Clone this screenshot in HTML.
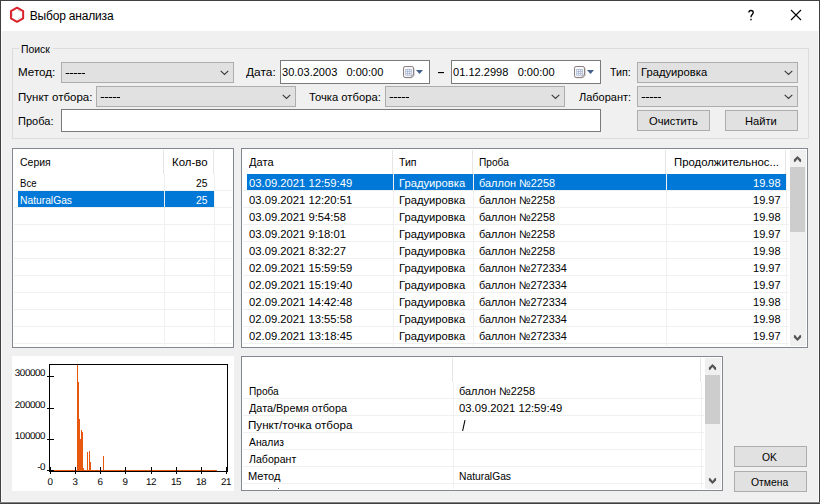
<!DOCTYPE html>
<html>
<head>
<meta charset="utf-8">
<title>Выбор анализа</title>
<style>
html,body{margin:0;padding:0;}
body{width:820px;height:504px;overflow:hidden;background:#f0f0f0;font-family:"Liberation Sans",sans-serif;font-size:11px;color:#000;position:relative;}
.a{position:absolute;white-space:nowrap;}
.t{position:absolute;white-space:nowrap;line-height:13px;height:13px;font-size:11px;transform-origin:0 0;}
#win{position:absolute;left:0;top:0;width:820px;height:504px;background:#f0f0f0;overflow:hidden;}
#titlebar{position:absolute;left:1px;top:1px;width:818px;height:30px;background:#fff;}
.bd{position:absolute;background:#404040;}
.combo{position:absolute;height:19px;border:1px solid #adadad;background:#e1e1e1;}
.combo svg{position:absolute;right:4px;top:6.7px;}
.edit{position:absolute;border:1px solid #7a7a7a;background:#fff;}
.btn{position:absolute;height:19px;border:1px solid #adadad;background:#e1e1e1;}
.list{position:absolute;border:1px solid #828790;background:#fff;}
.w{color:#fff;}
</style>
</head>
<body>
<div id="win">
  <div id="titlebar"></div>
  <div class="bd" style="left:0;top:0;width:820px;height:1px;"></div>
  <div class="bd" style="left:0;top:0;width:1px;height:504px;"></div>
  <div class="bd" style="left:1px;top:31px;width:1px;height:471px;background:#f9f9f9;"></div>
  <div class="bd" style="left:818px;top:31px;width:1px;height:471px;background:#f9f9f9;"></div>
  <div class="bd" style="left:1px;top:501px;width:818px;height:1px;background:#f9f9f9;"></div>
  <div class="bd" style="left:819px;top:0;width:1px;height:504px;"></div>
  <div class="bd" style="left:0;top:502px;width:820px;height:1px;background:#808080;"></div>
  <div class="bd" style="left:0;top:503px;width:820px;height:1px;"></div>

  <svg class="a" style="left:9px;top:6px;" width="17" height="18" viewBox="0 0 17 18">
    <polygon points="8.05,1.7 14.15,5.22 14.15,12.28 8.05,15.8 1.95,12.28 1.95,5.22" fill="#fff" stroke="#d9232a" stroke-width="2" stroke-linejoin="round"/>
    <path d="M3.4 6.6V10.6M8.6 3.9L11.4 5.6M8.6 13.2L11.7 11.3" stroke="#b4b4b4" stroke-width="0.6" fill="none"/>
  </svg>
  <div id="x_title" class="t" style="left:29.8px;top:8px;font-size:12px;line-height:16px;height:16px;letter-spacing:-0.19px;">Выбор анализа</div>
  <svg class="a" style="left:747px;top:9px;" width="9" height="13" viewBox="0 0 9 13"><path d="M1.9 3.5C1.9 2 2.9 1.5 4 1.5C5.3 1.5 6.2 2.2 6.2 3.5C6.2 4.7 5.5 5.2 4.8 5.9C4.2 6.5 4 7 4 8.3" stroke="#000" stroke-width="1.35" fill="none"/><rect x="3.3" y="9.8" width="1.4" height="1.5" fill="#000"/></svg>
  <svg class="a" style="left:790px;top:9px;" width="12" height="12" viewBox="0 0 12 12"><path d="M1 1 L11 11 M11 1 L1 11" stroke="#000" stroke-width="1.1" fill="none"/></svg>

<div class="a" style="left:12px;top:48px;width:795px;height:89px;border:1px solid #dcdcdc;"></div>
<div class="a" style="left:19px;top:44px;width:34px;height:9px;background:#f0f0f0;"></div>
<div id="x_poisk" class="t" style="left:21.20px;top:43px;transform:scaleX(0.9477);">Поиск</div>
<div id="x_metod" class="t" style="left:17.53px;top:65.6px;transform:scaleX(1.0557);">Метод:</div>
<div class="combo" style="left:61px;top:62px;width:171px;"><svg width="9" height="6" viewBox="0 0 9 6"><path d="M0.7 0.8 L4.5 4.5 L8.3 0.8" stroke="#3c3c3c" stroke-width="1.15" fill="none"/></svg></div>
<div class="a" style="left:65px;top:73px;width:20px;height:1px;background:rgba(0,0,0,0.33);"></div><div class="a" style="left:65.5px;top:73px;width:3px;height:1px;background:#000;"></div><div class="a" style="left:69.5px;top:73px;width:3px;height:1px;background:#000;"></div><div class="a" style="left:73.5px;top:73px;width:3px;height:1px;background:#000;"></div><div class="a" style="left:77.5px;top:73px;width:3px;height:1px;background:#000;"></div><div class="a" style="left:81.5px;top:73px;width:3px;height:1px;background:#000;"></div>
<div id="x_data" class="t" style="left:246.13px;top:65.6px;transform:scaleX(1.0871);">Дата:</div>
<div class="edit" style="left:280px;top:60px;width:148px;height:22px;"></div>
<div id="x_date1" class="t" style="left:281.90px;top:65.6px;transform:scaleX(1.0039);">30.03.2003&nbsp;&nbsp; 0:00:00</div>
<svg class="a" style="left:403px;top:66px;" width="21" height="13" viewBox="0 0 21 13">
<path d="M2 11.8H9.2L11.3 9.8V2.2" stroke="#cfcfcf" stroke-width="1" fill="none"/>
<path d="M2.1 0.5H8.9Q10.5 0.5 10.5 2.1V9L8.3 11.5H2.1Q0.5 11.5 0.5 9.9V2.1Q0.5 0.5 2.1 0.5Z" fill="#f7f7fb" stroke="#8d7f7e"/>
<path d="M10.5 9H8.3V11.5" fill="none" stroke="#a59a99" stroke-width="0.8"/>
<rect x="2.3" y="3" width="6.6" height="6.6" fill="#a9b6d0"/>
<path d="M3 3.7h1.3v1.3h-1.3zM5 3.7h1.3v1.3h-1.3zM7 3.7h1.3v1.3h-1.3zM3 5.7h1.3v1.3h-1.3zM5 5.7h1.3v1.3h-1.3zM7 5.7h1.3v1.3h-1.3zM3 7.7h1.3v1.3h-1.3zM5 7.7h1.3v1.3h-1.3zM7 7.7h1.3v1.3h-1.3z" fill="#eef1f8"/>
<polygon points="13,4 20,4 16.5,8" fill="#44618c"/>
</svg>
<div class="a" style="left:438px;top:72px;width:6px;height:1px;background:#000;"></div><div class="a" style="left:438px;top:73px;width:6px;height:1px;background:rgba(0,0,0,0.15);"></div>
<div class="edit" style="left:451px;top:60px;width:148px;height:22px;"></div>
<div id="x_date2" class="t" style="left:453.03px;top:65.6px;transform:scaleX(1.0064);">01.12.2998&nbsp;&nbsp; 0:00:00</div>
<svg class="a" style="left:574px;top:66px;" width="21" height="13" viewBox="0 0 21 13">
<path d="M2 11.8H9.2L11.3 9.8V2.2" stroke="#cfcfcf" stroke-width="1" fill="none"/>
<path d="M2.1 0.5H8.9Q10.5 0.5 10.5 2.1V9L8.3 11.5H2.1Q0.5 11.5 0.5 9.9V2.1Q0.5 0.5 2.1 0.5Z" fill="#f7f7fb" stroke="#8d7f7e"/>
<path d="M10.5 9H8.3V11.5" fill="none" stroke="#a59a99" stroke-width="0.8"/>
<rect x="2.3" y="3" width="6.6" height="6.6" fill="#a9b6d0"/>
<path d="M3 3.7h1.3v1.3h-1.3zM5 3.7h1.3v1.3h-1.3zM7 3.7h1.3v1.3h-1.3zM3 5.7h1.3v1.3h-1.3zM5 5.7h1.3v1.3h-1.3zM7 5.7h1.3v1.3h-1.3zM3 7.7h1.3v1.3h-1.3zM5 7.7h1.3v1.3h-1.3zM7 7.7h1.3v1.3h-1.3z" fill="#eef1f8"/>
<polygon points="13,4 20,4 16.5,8" fill="#44618c"/>
</svg>
<div id="x_tip" class="t" style="left:610.31px;top:65.6px;transform:scaleX(0.9732);">Тип:</div>
<div class="combo" style="left:637px;top:62px;width:159px;"><svg width="9" height="6" viewBox="0 0 9 6"><path d="M0.7 0.8 L4.5 4.5 L8.3 0.8" stroke="#3c3c3c" stroke-width="1.15" fill="none"/></svg></div>
<div id="x_grad_c" class="t" style="left:640.98px;top:65.6px;transform:scaleX(1.0192);">Градуировка</div>
<div id="x_punkt" class="t" style="left:17.62px;top:90.6px;transform:scaleX(1.0468);">Пункт отбора:</div>
<div class="combo" style="left:96px;top:86px;width:198px;"><svg width="9" height="6" viewBox="0 0 9 6"><path d="M0.7 0.8 L4.5 4.5 L8.3 0.8" stroke="#3c3c3c" stroke-width="1.15" fill="none"/></svg></div>
<div class="a" style="left:100px;top:97px;width:20px;height:1px;background:rgba(0,0,0,0.33);"></div><div class="a" style="left:100.5px;top:97px;width:3px;height:1px;background:#000;"></div><div class="a" style="left:104.5px;top:97px;width:3px;height:1px;background:#000;"></div><div class="a" style="left:108.5px;top:97px;width:3px;height:1px;background:#000;"></div><div class="a" style="left:112.5px;top:97px;width:3px;height:1px;background:#000;"></div><div class="a" style="left:116.5px;top:97px;width:3px;height:1px;background:#000;"></div>
<div id="x_tochka" class="t" style="left:309.14px;top:90.6px;transform:scaleX(1.0208);">Точка отбора:</div>
<div class="combo" style="left:385px;top:86px;width:178px;"><svg width="9" height="6" viewBox="0 0 9 6"><path d="M0.7 0.8 L4.5 4.5 L8.3 0.8" stroke="#3c3c3c" stroke-width="1.15" fill="none"/></svg></div>
<div class="a" style="left:389px;top:97px;width:20px;height:1px;background:rgba(0,0,0,0.33);"></div><div class="a" style="left:389.5px;top:97px;width:3px;height:1px;background:#000;"></div><div class="a" style="left:393.5px;top:97px;width:3px;height:1px;background:#000;"></div><div class="a" style="left:397.5px;top:97px;width:3px;height:1px;background:#000;"></div><div class="a" style="left:401.5px;top:97px;width:3px;height:1px;background:#000;"></div><div class="a" style="left:405.5px;top:97px;width:3px;height:1px;background:#000;"></div>
<div id="x_labor" class="t" style="left:579.10px;top:90.6px;transform:scaleX(0.9983);">Лаборант:</div>
<div class="combo" style="left:637px;top:86px;width:159px;"><svg width="9" height="6" viewBox="0 0 9 6"><path d="M0.7 0.8 L4.5 4.5 L8.3 0.8" stroke="#3c3c3c" stroke-width="1.15" fill="none"/></svg></div>
<div class="a" style="left:641px;top:97px;width:20px;height:1px;background:rgba(0,0,0,0.33);"></div><div class="a" style="left:641.5px;top:97px;width:3px;height:1px;background:#000;"></div><div class="a" style="left:645.5px;top:97px;width:3px;height:1px;background:#000;"></div><div class="a" style="left:649.5px;top:97px;width:3px;height:1px;background:#000;"></div><div class="a" style="left:653.5px;top:97px;width:3px;height:1px;background:#000;"></div><div class="a" style="left:657.5px;top:97px;width:3px;height:1px;background:#000;"></div>
<div id="x_proba_l" class="t" style="left:18.26px;top:114.6px;transform:scaleX(1.0024);">Проба:</div>
<div class="edit" style="left:61px;top:109px;width:538px;height:21px;"></div>
<div class="btn" style="left:637px;top:110px;width:71px;"></div>
<div id="x_ochist" class="t" style="left:648.54px;top:115px;transform:scaleX(1.0176);">Очистить</div>
<div class="btn" style="left:725px;top:110px;width:71px;"></div>
<div id="x_naiti" class="t" style="left:745.08px;top:115px;transform:scaleX(1.0135);">Найти</div>
<div class="list" style="left:12px;top:148px;width:220px;height:198px;"></div>
<div class="a" style="left:163px;top:150px;width:1px;height:24px;background:#e5e5e5;"></div>
<div class="a" style="left:164px;top:174px;width:1px;height:172px;background:#f0f0f0;"></div>
<div class="a" style="left:213px;top:150px;width:1px;height:24px;background:#e5e5e5;"></div>
<div class="a" style="left:214px;top:174px;width:1px;height:172px;background:#f0f0f0;"></div>
<div class="a" style="left:14px;top:190px;width:218px;height:1px;background:#f0f0f0;"></div>
<div class="a" style="left:14px;top:207px;width:218px;height:1px;background:#f0f0f0;"></div>
<div class="a" style="left:14px;top:224px;width:218px;height:1px;background:#f0f0f0;"></div>
<div class="a" style="left:14px;top:241px;width:218px;height:1px;background:#f0f0f0;"></div>
<div class="a" style="left:14px;top:258px;width:218px;height:1px;background:#f0f0f0;"></div>
<div class="a" style="left:14px;top:275px;width:218px;height:1px;background:#f0f0f0;"></div>
<div class="a" style="left:14px;top:292px;width:218px;height:1px;background:#f0f0f0;"></div>
<div class="a" style="left:14px;top:309px;width:218px;height:1px;background:#f0f0f0;"></div>
<div class="a" style="left:14px;top:326px;width:218px;height:1px;background:#f0f0f0;"></div>
<div class="a" style="left:14px;top:343px;width:218px;height:1px;background:#f0f0f0;"></div>
<div id="x_seria" class="t" style="left:19.73px;top:156px;transform:scaleX(0.9524);">Серия</div>
<div id="x_kolvo" class="t" style="left:171.60px;top:156px;transform:scaleX(1.0378);">Кол-во</div>
<div id="x_vse" class="t" style="left:19.64px;top:177px;transform:scaleX(0.8698);">Все</div>
<div id="x_n25" class="t" style="left:196.20px;top:177px;transform:scaleX(0.9394);">25</div>
<div class="a" style="left:18px;top:191px;width:146px;height:16px;background:#0078d7;"></div>
<div class="a" style="left:165px;top:191px;width:49px;height:16px;background:#0078d7;"></div>
<div id="x_natgas" class="t w" style="left:19.80px;top:194px;transform:scaleX(0.9345);">NaturalGas</div>
<div id="x_n25_1" class="t w" style="left:196.20px;top:194px;transform:scaleX(0.9394);">25</div>
<div class="list" style="left:241px;top:148px;width:565px;height:198px;"></div>
<div class="a" style="left:392px;top:150px;width:1px;height:24px;background:#e5e5e5;"></div>
<div class="a" style="left:393px;top:174px;width:1px;height:172px;background:#f0f0f0;"></div>
<div class="a" style="left:472px;top:150px;width:1px;height:24px;background:#e5e5e5;"></div>
<div class="a" style="left:473px;top:174px;width:1px;height:172px;background:#f0f0f0;"></div>
<div class="a" style="left:665px;top:150px;width:1px;height:24px;background:#e5e5e5;"></div>
<div class="a" style="left:666px;top:174px;width:1px;height:172px;background:#f0f0f0;"></div>
<div class="a" style="left:785px;top:150px;width:1px;height:24px;background:#e5e5e5;"></div>
<div class="a" style="left:786px;top:174px;width:1px;height:172px;background:#f0f0f0;"></div>
<div class="a" style="left:243px;top:190px;width:546px;height:1px;background:#f0f0f0;"></div>
<div class="a" style="left:243px;top:207px;width:546px;height:1px;background:#f0f0f0;"></div>
<div class="a" style="left:243px;top:224px;width:546px;height:1px;background:#f0f0f0;"></div>
<div class="a" style="left:243px;top:241px;width:546px;height:1px;background:#f0f0f0;"></div>
<div class="a" style="left:243px;top:258px;width:546px;height:1px;background:#f0f0f0;"></div>
<div class="a" style="left:243px;top:275px;width:546px;height:1px;background:#f0f0f0;"></div>
<div class="a" style="left:243px;top:292px;width:546px;height:1px;background:#f0f0f0;"></div>
<div class="a" style="left:243px;top:309px;width:546px;height:1px;background:#f0f0f0;"></div>
<div class="a" style="left:243px;top:326px;width:546px;height:1px;background:#f0f0f0;"></div>
<div class="a" style="left:243px;top:343px;width:546px;height:1px;background:#f0f0f0;"></div>
<div id="x_h_data" class="t" style="left:249.26px;top:156px;transform:scaleX(1.0077);">Дата</div>
<div id="x_h_tip" class="t" style="left:399.14px;top:156px;transform:scaleX(0.9573);">Тип</div>
<div id="x_h_proba" class="t" style="left:478.70px;top:156px;transform:scaleX(0.9228);">Проба</div>
<div id="x_h_prod" class="t" style="left:673.58px;top:156px;transform:scaleX(1.0313);">Продолжительнос...</div>
<div class="a" style="left:247px;top:174px;width:146px;height:16px;background:#0078d7;"></div>
<div class="a" style="left:394px;top:174px;width:79px;height:16px;background:#0078d7;"></div>
<div class="a" style="left:474px;top:174px;width:192px;height:16px;background:#0078d7;"></div>
<div class="a" style="left:667px;top:174px;width:119px;height:16px;background:#0078d7;"></div>
<div id="x_r_date" class="t w" style="left:249.13px;top:177px;transform:scaleX(1.0232);">03.09.2021 12:59:49</div>
<div id="x_r_grad" class="t w" style="left:398.98px;top:177px;transform:scaleX(1.0203);">Градуировка</div>
<div id="x_r_b1" class="t w" style="left:478.73px;top:177px;transform:scaleX(0.9926);">баллон №2258</div>
<div id="x_r_val" class="t w" style="left:752.76px;top:177px;transform:scaleX(1.0027);">19.98</div>
<div id="x_r_date_1" class="t" style="left:249.13px;top:194px;transform:scaleX(1.0232);">03.09.2021 12:20:51</div>
<div id="x_r_grad_1" class="t" style="left:398.98px;top:194px;transform:scaleX(1.0203);">Градуировка</div>
<div id="x_r_b1_1" class="t" style="left:478.73px;top:194px;transform:scaleX(0.9926);">баллон №2258</div>
<div id="x_r_val_1" class="t" style="left:752.76px;top:194px;transform:scaleX(1.0027);">19.97</div>
<div id="x_r_date_2" class="t" style="left:249.13px;top:211px;transform:scaleX(1.0232);">03.09.2021 9:54:58</div>
<div id="x_r_grad_2" class="t" style="left:398.98px;top:211px;transform:scaleX(1.0203);">Градуировка</div>
<div id="x_r_b1_2" class="t" style="left:478.73px;top:211px;transform:scaleX(0.9926);">баллон №2258</div>
<div id="x_r_val_2" class="t" style="left:752.76px;top:211px;transform:scaleX(1.0027);">19.98</div>
<div id="x_r_date_3" class="t" style="left:249.13px;top:228px;transform:scaleX(1.0232);">03.09.2021 9:18:01</div>
<div id="x_r_grad_3" class="t" style="left:398.98px;top:228px;transform:scaleX(1.0203);">Градуировка</div>
<div id="x_r_b1_3" class="t" style="left:478.73px;top:228px;transform:scaleX(0.9926);">баллон №2258</div>
<div id="x_r_val_3" class="t" style="left:752.76px;top:228px;transform:scaleX(1.0027);">19.97</div>
<div id="x_r_date_4" class="t" style="left:249.13px;top:245px;transform:scaleX(1.0232);">03.09.2021 8:32:27</div>
<div id="x_r_grad_4" class="t" style="left:398.98px;top:245px;transform:scaleX(1.0203);">Градуировка</div>
<div id="x_r_b1_4" class="t" style="left:478.73px;top:245px;transform:scaleX(0.9926);">баллон №2258</div>
<div id="x_r_val_4" class="t" style="left:752.76px;top:245px;transform:scaleX(1.0027);">19.98</div>
<div id="x_r_date_5" class="t" style="left:249.13px;top:262px;transform:scaleX(1.0232);">02.09.2021 15:59:59</div>
<div id="x_r_grad_5" class="t" style="left:398.98px;top:262px;transform:scaleX(1.0203);">Градуировка</div>
<div id="x_r_b2" class="t" style="left:478.73px;top:262px;transform:scaleX(0.9873);">баллон №272334</div>
<div id="x_r_val_5" class="t" style="left:752.76px;top:262px;transform:scaleX(1.0027);">19.97</div>
<div id="x_r_date_6" class="t" style="left:249.13px;top:279px;transform:scaleX(1.0232);">02.09.2021 15:19:40</div>
<div id="x_r_grad_6" class="t" style="left:398.98px;top:279px;transform:scaleX(1.0203);">Градуировка</div>
<div id="x_r_b2_1" class="t" style="left:478.73px;top:279px;transform:scaleX(0.9873);">баллон №272334</div>
<div id="x_r_val_6" class="t" style="left:752.76px;top:279px;transform:scaleX(1.0027);">19.97</div>
<div id="x_r_date_7" class="t" style="left:249.13px;top:296px;transform:scaleX(1.0232);">02.09.2021 14:42:48</div>
<div id="x_r_grad_7" class="t" style="left:398.98px;top:296px;transform:scaleX(1.0203);">Градуировка</div>
<div id="x_r_b2_2" class="t" style="left:478.73px;top:296px;transform:scaleX(0.9873);">баллон №272334</div>
<div id="x_r_val_7" class="t" style="left:752.76px;top:296px;transform:scaleX(1.0027);">19.98</div>
<div id="x_r_date_8" class="t" style="left:249.13px;top:313px;transform:scaleX(1.0232);">02.09.2021 13:55:58</div>
<div id="x_r_grad_8" class="t" style="left:398.98px;top:313px;transform:scaleX(1.0203);">Градуировка</div>
<div id="x_r_b2_3" class="t" style="left:478.73px;top:313px;transform:scaleX(0.9873);">баллон №272334</div>
<div id="x_r_val_8" class="t" style="left:752.76px;top:313px;transform:scaleX(1.0027);">19.98</div>
<div id="x_r_date_9" class="t" style="left:249.13px;top:330px;transform:scaleX(1.0232);">02.09.2021 13:18:45</div>
<div id="x_r_grad_9" class="t" style="left:398.98px;top:330px;transform:scaleX(1.0203);">Градуировка</div>
<div id="x_r_b2_4" class="t" style="left:478.73px;top:330px;transform:scaleX(0.9873);">баллон №272334</div>
<div id="x_r_val_9" class="t" style="left:752.76px;top:330px;transform:scaleX(1.0027);">19.97</div>
<div class="a" style="left:790px;top:150px;width:16px;height:196px;background:#f0f0f0;"></div>
<div class="a" style="left:790px;top:167px;width:15px;height:65px;background:#cdcdcd;"></div>
<svg class="a" style="left:793px;top:156px;" width="9" height="7" viewBox="0 0 9 7"><polygon points="4.5,0.0 8.1,3.6 8.1,5.5 7.1,6.3 4.5,3.1 1.9,6.3 0.9,5.5 0.9,3.6" fill="#555"/></svg>
<svg class="a" style="left:793px;top:334px;" width="9" height="7" viewBox="0 0 9 7"><polygon points="4.5,7.0 8.1,3.4 8.1,1.5 7.1,0.7 4.5,3.9 1.9,0.7 0.9,1.5 0.9,3.4" fill="#555"/></svg>
<div class="a" style="left:12px;top:356px;width:222px;height:135px;background:#fff;"><svg class="a" style="left:0;top:0;" width="222" height="134" viewBox="0 0 222 134" shape-rendering="crispEdges">
<rect x="37" y="8" width="179" height="1" fill="#000"/>
<rect x="37" y="8" width="1" height="108" fill="#000"/>
<rect x="215" y="8" width="1" height="108" fill="#000"/>
<rect x="37" y="115" width="179" height="1" fill="#000"/>
<rect x="35" y="20" width="7" height="1" fill="#000"/>
<rect x="35" y="52" width="7" height="1" fill="#000"/>
<rect x="35" y="83" width="7" height="1" fill="#000"/>
<rect x="35" y="114" width="7" height="1" fill="#000"/>
<rect x="38" y="111" width="1" height="7" fill="#000"/>
<rect x="63" y="111" width="1" height="7" fill="#000"/>
<rect x="88" y="111" width="1" height="7" fill="#000"/>
<rect x="113" y="111" width="1" height="7" fill="#000"/>
<rect x="139" y="111" width="1" height="7" fill="#000"/>
<rect x="164" y="111" width="1" height="7" fill="#000"/>
<rect x="189" y="111" width="1" height="7" fill="#000"/>
<rect x="214" y="111" width="1" height="7" fill="#000"/>
<rect x="65" y="9" width="1" height="105" fill="#e8570f"/>
<rect x="66" y="26" width="1" height="88" fill="#e8570f"/>
<rect x="67" y="63" width="1" height="51" fill="#e8570f"/>
<rect x="68" y="83" width="1" height="31" fill="#e8570f"/>
<rect x="69" y="74" width="1" height="40" fill="#e8570f"/>
<rect x="70" y="76" width="1" height="38" fill="#e8570f"/>
<rect x="71" y="112" width="1" height="2" fill="#e8570f"/>
<rect x="75" y="96" width="1" height="18" fill="#e8570f"/>
<rect x="77" y="95" width="1" height="19" fill="#e8570f"/>
<rect x="78" y="106" width="1" height="8" fill="#e8570f"/>
<rect x="91" y="100" width="1" height="14" fill="#e8570f"/>
<rect x="42" y="114" width="163" height="1" fill="#e8570f"/>
<rect x="63" y="111" width="1" height="7" fill="#000"/>
<rect x="88" y="111" width="1" height="7" fill="#000"/>
<rect x="113" y="111" width="1" height="7" fill="#000"/>
<rect x="139" y="111" width="1" height="7" fill="#000"/>
<rect x="164" y="111" width="1" height="7" fill="#000"/>
<rect x="189" y="111" width="1" height="7" fill="#000"/>
</svg>
<div class="a" style="left:-7px;top:13px;width:40px;text-align:right;font-size:9.8px;letter-spacing:-0.42px;line-height:10px;text-rendering:geometricPrecision;">300000</div>
<div class="a" style="left:-7px;top:45px;width:40px;text-align:right;font-size:9.8px;letter-spacing:-0.42px;line-height:10px;text-rendering:geometricPrecision;">200000</div>
<div class="a" style="left:-7px;top:76px;width:40px;text-align:right;font-size:9.8px;letter-spacing:-0.42px;line-height:10px;text-rendering:geometricPrecision;">100000</div>
<div class="a" style="left:-7px;top:107px;width:40px;text-align:right;font-size:9.8px;letter-spacing:-0.42px;line-height:10px;text-rendering:geometricPrecision;">-0</div>
<div class="a" style="left:23px;top:122px;width:30px;text-align:center;font-size:9.8px;letter-spacing:-0.42px;line-height:10px;text-rendering:geometricPrecision;">0</div>
<div class="a" style="left:48px;top:122px;width:30px;text-align:center;font-size:9.8px;letter-spacing:-0.42px;line-height:10px;text-rendering:geometricPrecision;">3</div>
<div class="a" style="left:73px;top:122px;width:30px;text-align:center;font-size:9.8px;letter-spacing:-0.42px;line-height:10px;text-rendering:geometricPrecision;">6</div>
<div class="a" style="left:98px;top:122px;width:30px;text-align:center;font-size:9.8px;letter-spacing:-0.42px;line-height:10px;text-rendering:geometricPrecision;">9</div>
<div class="a" style="left:124px;top:122px;width:30px;text-align:center;font-size:9.8px;letter-spacing:-0.42px;line-height:10px;text-rendering:geometricPrecision;">12</div>
<div class="a" style="left:149px;top:122px;width:30px;text-align:center;font-size:9.8px;letter-spacing:-0.42px;line-height:10px;text-rendering:geometricPrecision;">15</div>
<div class="a" style="left:174px;top:122px;width:30px;text-align:center;font-size:9.8px;letter-spacing:-0.42px;line-height:10px;text-rendering:geometricPrecision;">18</div>
<div class="a" style="left:199px;top:122px;width:30px;text-align:center;font-size:9.8px;letter-spacing:-0.42px;line-height:10px;text-rendering:geometricPrecision;">21</div></div>
<div class="list" style="left:241px;top:356px;width:480px;height:133px;"></div>
<div class="a" style="left:452px;top:358px;width:1px;height:24px;background:#e5e5e5;"></div>
<div class="a" style="left:453px;top:382px;width:1px;height:107px;background:#f0f0f0;"></div>
<div class="a" style="left:700px;top:358px;width:1px;height:24px;background:#e5e5e5;"></div>
<div class="a" style="left:701px;top:382px;width:1px;height:107px;background:#f0f0f0;"></div>
<div class="a" style="left:243px;top:398px;width:461px;height:1px;background:#f0f0f0;"></div>
<div class="a" style="left:243px;top:415px;width:461px;height:1px;background:#f0f0f0;"></div>
<div class="a" style="left:243px;top:432px;width:461px;height:1px;background:#f0f0f0;"></div>
<div class="a" style="left:243px;top:449px;width:461px;height:1px;background:#f0f0f0;"></div>
<div class="a" style="left:243px;top:466px;width:461px;height:1px;background:#f0f0f0;"></div>
<div class="a" style="left:243px;top:483px;width:461px;height:1px;background:#f0f0f0;"></div>
<div id="x_d_proba" class="t" style="left:248.80px;top:385px;transform:scaleX(0.9204);">Проба</div>
<div id="x_d_dv" class="t" style="left:248.80px;top:402px;transform:scaleX(0.9887);">Дата/Время отбора</div>
<div id="x_d_pt" class="t" style="left:247.72px;top:419px;transform:scaleX(1.0564);">Пункт/точка отбора</div>
<div id="x_d_an" class="t" style="left:248.97px;top:436px;transform:scaleX(0.9403);">Анализ</div>
<div id="x_d_lab" class="t" style="left:248.98px;top:453px;transform:scaleX(0.9625);">Лаборант</div>
<div id="x_d_met" class="t" style="left:247.90px;top:470px;transform:scaleX(1.0067);">Метод</div>
<div id="x_r_b1_5" class="t" style="left:458.83px;top:385px;transform:scaleX(0.9926);">баллон №2258</div>
<div id="x_r_date_10" class="t" style="left:459.08px;top:402px;transform:scaleX(1.0232);">03.09.2021 12:59:49</div>
<svg class="a" style="left:460px;top:418px;" width="8" height="14" viewBox="0 0 8 14"><path d="M2.6 12.8L5 2.2" stroke="#000" stroke-width="1.05" fill="none"/></svg>
<div id="x_natgas_1" class="t" style="left:459.10px;top:470px;transform:scaleX(0.9345);">NaturalGas</div>
<div class="a" style="left:278px;top:488px;width:1px;height:1px;background:#555;"></div>
<div class="a" style="left:705px;top:358px;width:16px;height:131px;background:#f0f0f0;"></div>
<div class="a" style="left:705px;top:375px;width:15px;height:49px;background:#cdcdcd;"></div>
<svg class="a" style="left:708px;top:364px;" width="9" height="7" viewBox="0 0 9 7"><polygon points="4.5,0.0 8.1,3.6 8.1,5.5 7.1,6.3 4.5,3.1 1.9,6.3 0.9,5.5 0.9,3.6" fill="#555"/></svg>
<svg class="a" style="left:708px;top:477px;" width="9" height="7" viewBox="0 0 9 7"><polygon points="4.5,7.0 8.1,3.4 8.1,1.5 7.1,0.7 4.5,3.9 1.9,0.7 0.9,1.5 0.9,3.4" fill="#555"/></svg>
<div class="btn" style="left:734px;top:446px;width:71px;"></div>
<div id="x_ok" class="t" style="left:761.95px;top:451px;transform:scaleX(0.9400);">OK</div>
<div class="btn" style="left:734px;top:471px;width:71px;"></div>
<div id="x_otmena" class="t" style="left:750.54px;top:476px;transform:scaleX(0.9459);">Отмена</div>
</div>
</body>
</html>
